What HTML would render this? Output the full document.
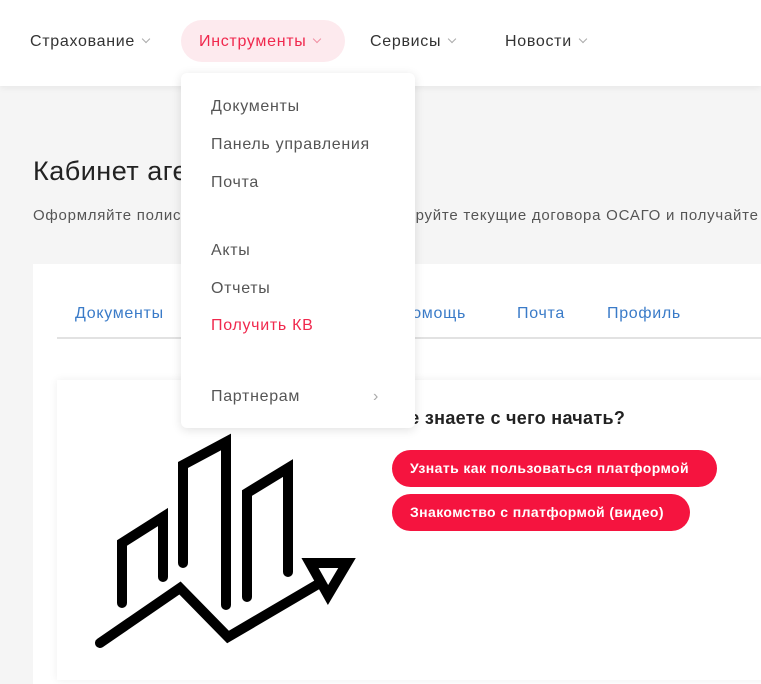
<!DOCTYPE html>
<html><head><meta charset="utf-8"><style>
*{margin:0;padding:0;box-sizing:border-box}
body{width:761px;height:659px;overflow:hidden;background:#f5f5f5;font-family:"Liberation Sans",Arial,sans-serif;position:relative}
.hdr{position:absolute;left:0;top:0;width:761px;height:86px;background:#fff;box-shadow:0 2px 6px rgba(0,0,0,.06)}
.nav{position:absolute;top:33px;font-size:16px;letter-spacing:.7px;color:#333}
.chev{display:inline-block;width:6px;height:6px;border-right:1.3px solid #aaa;border-bottom:1.3px solid #aaa;transform:rotate(45deg);margin-left:8px;position:relative;top:-4px}
.pill{position:absolute;left:181px;top:20px;width:164px;height:42px;border-radius:21px;background:#fdeaee}
.t{position:absolute;white-space:nowrap}
.card{position:absolute;left:33px;top:264px;width:740px;height:420px;background:#fff}
.tabs a{position:absolute;top:305px;font-size:16px;letter-spacing:.7px;color:#3a7bc8;text-decoration:none}
.line{position:absolute;left:57px;top:337px;width:704px;height:2px;background:#e2e2e2}
.panel{position:absolute;left:57px;top:380px;width:720px;height:300px;background:#fff;box-shadow:0 0 8px rgba(0,0,0,.07)}
.dd{position:absolute;left:181px;top:73px;width:234px;height:355px;background:#fff;border-radius:6px;box-shadow:0 2px 10px rgba(0,0,0,.12)}
.dd div{position:absolute;left:30px;font-size:16px;letter-spacing:.7px;color:#555}
.btn{position:absolute;left:392px;height:37px;border-radius:19px;background:#f5143f;color:#fff;font-weight:bold;font-size:14px;letter-spacing:.4px;line-height:37px;padding-left:18px;white-space:nowrap}
</style></head><body>
<div class="hdr"></div>
<div class="pill"></div>
<div class="nav" style="left:30px">Страхование<span class="chev"></span></div>
<div class="nav" style="left:199px;color:#f0284d">Инструменты<span class="chev" style="border-color:#f08fa2"></span></div>
<div class="nav" style="left:370px">Сервисы<span class="chev"></span></div>
<div class="nav" style="left:505px">Новости<span class="chev"></span></div>
<div class="t" style="left:33px;top:156px;font-size:27px;letter-spacing:.5px;color:#222">Кабинет агента</div>
<div class="t" style="left:33px;top:207px;font-size:15px;letter-spacing:.75px;color:#555">Оформляйте полисы, просматривайте и контролируйте текущие договора ОСАГО и получайте</div>
<div class="card"></div>
<div class="tabs"><a style="left:75px">Документы</a><a style="left:400px">Помощь</a><a style="left:517px">Почта</a><a style="left:607px">Профиль</a></div>
<div class="line"></div>
<div class="panel"></div>
<div class="t" style="left:396px;top:408px;font-size:18px;letter-spacing:.3px;font-weight:bold;color:#222">Не знаете с чего начать?</div>
<div class="btn" style="top:450px;width:325px">Узнать как пользоваться платформой</div>
<div class="btn" style="top:494px;width:298px">Знакомство с платформой (видео)</div>
<svg style="position:absolute;left:0;top:0" width="761" height="659"><g fill="none" stroke="#000" stroke-width="10" stroke-linecap="round" stroke-linejoin="miter">
<path d="M122 603V543L163 517V577"/><path d="M183 563V465L226 442V605"/><path d="M247 597V493L288 468V572"/>
<path d="M100 643L180 588L228 637L320 583"/><path d="M310 563H347L328 595Z"/></g></svg>
<div class="dd">
<div style="top:25px">Документы</div><div style="top:63px">Панель управления</div><div style="top:101px">Почта</div>
<div style="top:169px">Акты</div><div style="top:207px">Отчеты</div><div style="top:244px;color:#f0284d">Получить КВ</div>
<div style="top:315px">Партнерам</div><div style="top:315px;left:192px;color:#aaa;font-size:16px">›</div>
</div>
</body></html>
